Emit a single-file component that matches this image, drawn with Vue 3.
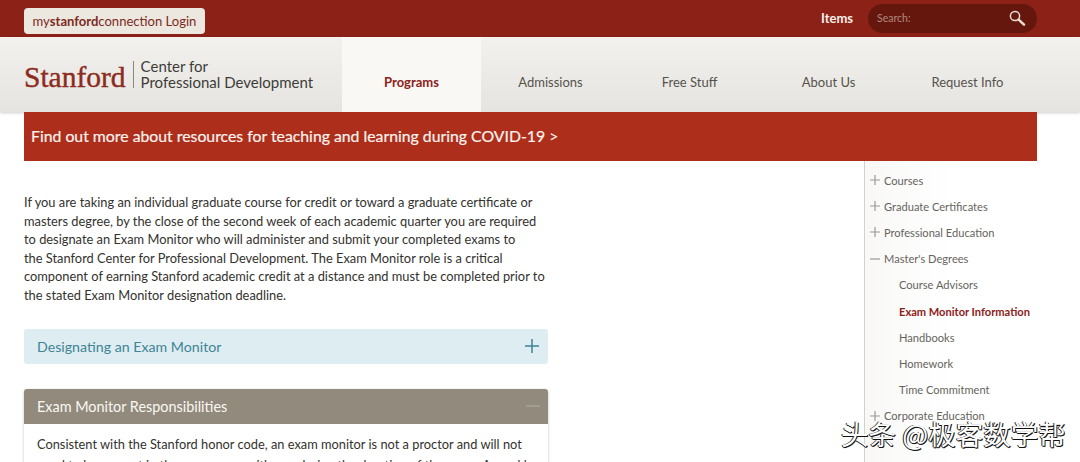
<script setup>
const navItems = [
  { label: 'Programs', active: true },
  { label: 'Admissions' },
  { label: 'Free Stuff' },
  { label: 'About Us' },
  { label: 'Request Info' },
]

const sideItems = [
  { label: 'Courses', icon: 'plus' },
  { label: 'Graduate Certificates', icon: 'plus' },
  { label: 'Professional Education', icon: 'plus' },
  { label: "Master's Degrees", icon: 'minus' },
  { label: 'Course Advisors', sub: true },
  { label: 'Exam Monitor Information', sub: true, active: true },
  { label: 'Handbooks', sub: true },
  { label: 'Homework', sub: true },
  { label: 'Time Commitment', sub: true },
  { label: 'Corporate Education', icon: 'plus' },
]
</script>

<template>
  <div class="page">
    <div class="topbar">
      <a class="login">my<b>stanford</b>connection Login</a>
      <div class="top-right">
        <span class="items">Items</span>
        <div class="search">
          <span>Search:</span>
          <svg width="18" height="18" viewBox="0 0 18 18">
            <circle cx="7" cy="7" r="4.6" fill="none" stroke="#e9dcd6" stroke-width="1.5" />
            <path d="M10.6 10.6 L16 15.6" stroke="#e9dcd6" stroke-width="2.6" stroke-linecap="round" />
          </svg>
        </div>
      </div>
    </div>

    <header class="header">
      <div class="brand">
        <span class="wordmark">Stanford</span>
        <span class="brand-sub">Center for<br />Professional Development</span>
      </div>
      <nav class="nav">
        <a v-for="item in navItems" :key="item.label" :class="['nav-item', { active: item.active }]">
          {{ item.label }}
        </a>
      </nav>
    </header>

    <div class="banner">Find out more about resources for teaching and learning during COVID-19 &gt;</div>

    <div class="columns">
      <main class="content">
        <p class="intro">
          If you are taking an individual graduate course for credit or toward a graduate certificate or<br />
          masters degree, by the close of the second week of each academic quarter you are required<br />
          to designate an Exam Monitor who will administer and submit your completed exams to<br />
          the Stanford Center for Professional Development. The Exam Monitor role is a critical<br />
          component of earning Stanford academic credit at a distance and must be completed prior to<br />
          the stated Exam Monitor designation deadline.
        </p>

        <div class="acc acc-closed">
          <span>Designating an Exam Monitor</span>
          <svg width="16" height="16" viewBox="0 0 16 16">
            <path d="M8 1 V15 M1 8 H15" stroke="#3f8496" stroke-width="1.5" />
          </svg>
        </div>

        <div class="acc-open">
          <div class="acc acc-head">
            <span>Exam Monitor Responsibilities</span>
            <svg width="14" height="2" viewBox="0 0 14 2">
              <path d="M0 1 H14" stroke="#a9a397" stroke-width="1.5" />
            </svg>
          </div>
          <p class="acc-body">
            Consistent with the Stanford honor code, an exam monitor is not a proctor and will not<br />
            need to be present in the same room with you during the duration of the exam. As and b
          </p>
        </div>
      </main>

      <aside class="sidebar">
        <a
          v-for="item in sideItems"
          :key="item.label"
          :class="['side-item', { sub: item.sub, active: item.active }]"
        >
          <svg v-if="item.icon" class="side-icon" width="10" height="10" viewBox="0 0 10 10">
            <path v-if="item.icon === 'plus'" d="M5 0 V10 M0 5 H10" stroke="#9a9a94" stroke-width="1.2" />
            <path v-else d="M0 5 H10" stroke="#9a9a94" stroke-width="1.2" />
          </svg>
          {{ item.label }}
        </a>
      </aside>
    </div>

    <div class="watermark">头条 @极客数学帮</div>
  </div>
</template>

<style scoped>
.page {
  position: relative;
  width: 1080px;
  height: 462px;
  overflow: hidden;
  background: #fff;
  font-family: "Lato", "Noto Sans", sans-serif;
  color: #33322e;
}

.topbar {
  height: 37px;
  padding: 0 43px 0 24px;
  display: flex;
  align-items: center;
  justify-content: space-between;
  background: #8c2118;
}

.login {
  height: 26px;
  margin-top: 5px;
  padding: 0 8.5px;
  display: flex;
  align-items: center;
  background: #ece7df;
  border-radius: 4px;
  font-size: 13.05px;
  color: #7c2a22;
}

.login b {
  font-weight: 700;
}

.top-right {
  display: flex;
  align-items: center;
  gap: 15px;
  margin-bottom: 1px;
}

.items {
  color: #f7eee8;
  font-size: 13px;
  font-weight: 700;
}

.search {
  width: 169px;
  height: 29px;
  box-sizing: border-box;
  padding: 0 11px 0 9px;
  display: flex;
  align-items: center;
  justify-content: space-between;
  background: #66170d;
  border-radius: 15px;
  color: #b08a7f;
  font-size: 10.5px;
}

.header {
  height: 75px;
  padding-left: 24px;
  display: flex;
  background: linear-gradient(#f2f1ed, #e6e4e0);
  box-shadow: 0 1px 3px rgba(0, 0, 0, 0.2);
}

.brand {
  width: 318px;
  display: flex;
  align-items: center;
  gap: 7px;
}

.wordmark {
  padding: 6px 7px 0 0;
  border-right: 1px solid #8a8883;
  font-family: "Liberation Serif", serif;
  font-size: 29.5px;
  line-height: 21px;
  color: #8c2b20;
  -webkit-text-stroke: 0.4px #8c2b20;
}

.brand-sub {
  margin-bottom: 2px;
  font-size: 15px;
  line-height: 16px;
  color: #3d3c39;
}

.nav {
  display: grid;
  grid-template-columns: repeat(5, 139px);
}

.nav-item {
  padding-top: 37px;
  text-align: center;
  font-size: 13px;
  color: #55534d;
}

.nav-item.active {
  background: #f9f8f5;
  color: #8c2118;
  font-weight: 700;
}

.banner {
  position: relative;
  height: 49px;
  margin: 0 43px 0 24px;
  padding: 0 0 2px 7px;
  box-sizing: border-box;
  display: flex;
  align-items: center;
  background: #ae2e1c;
  color: #fbf3ee;
  font-size: 15.8px;
  -webkit-text-stroke: 0.2px #fbf3ee;
}

.columns {
  display: flex;
  padding-left: 24px;
}

.content {
  width: 524px;
  padding-top: 32px;
}

.intro {
  margin: 0 0 24px;
  font-size: 12.85px;
  line-height: 18.6px;
  white-space: nowrap;
}

.acc {
  height: 35px;
  padding: 0 8px 0 13px;
  display: flex;
  align-items: center;
  justify-content: space-between;
  border-radius: 3px;
}

.acc-closed {
  margin-bottom: 25px;
  background: #deedf1;
  color: #3f8496;
  font-size: 14.2px;
}

.acc-open {
  box-shadow: 0 1px 3px rgba(0, 0, 0, 0.25);
  border-radius: 3px;
}

.acc-head {
  background: #918a7d;
  color: #fbf8f2;
  border-radius: 3px 3px 0 0;
  font-size: 14.4px;
}

.acc-body {
  margin: 0;
  padding: 10px 13px 0;
  font-size: 12.82px;
  line-height: 21px;
  white-space: nowrap;
  overflow: hidden;
}

.sidebar {
  width: 216px;
  height: 301px;
  margin-left: 316px;
  padding: 6px 0 0 5px;
  box-sizing: border-box;
  display: flex;
  flex-direction: column;
  border-left: 1px solid #d4d2ce;
  background: linear-gradient(90deg, #f9f8f7, #fff 40%);
}

.side-item {
  height: 26.2px;
  flex-shrink: 0;
  display: flex;
  align-items: center;
  gap: 4px;
  font-size: 11.1px;
  color: #66645e;
}

.side-item.sub {
  padding-left: 29px;
}

.side-item.active {
  color: #8c2118;
  font-weight: 700;
}

.side-icon {
  flex-shrink: 0;
}

.watermark {
  position: absolute;
  left: 841px;
  top: 415px;
  font-family: "Noto Sans CJK SC", sans-serif;
  font-size: 27.5px;
  line-height: 36px;
  white-space: nowrap;
  color: #fff;
  text-shadow: 1px 1px 0 #111, 0 1px 0 #111, -1px 0 0 #222;
}
</style>
